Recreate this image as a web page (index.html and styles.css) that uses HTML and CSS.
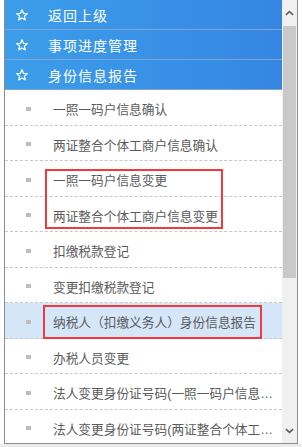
FILE: index.html
```html
<!DOCTYPE html>
<html lang="zh-CN">
<head>
  <meta charset="UTF-8" />
  <title>身份信息报告</title>
  <meta name="viewport" content="width=device-width, initial-scale=1.0" />
  <link rel="stylesheet" href="styles.css">
</head>
<body>
  <div class="frame">
    <div class="menu">
      <ul class="groups">
        <li class="group">
          <svg class="star" viewBox="0 0 12 12"><polygon points="6,0.8 7.5,4.3 11.3,4.6 8.4,7.1 9.3,10.9 6,8.9 2.7,10.9 3.6,7.1 0.7,4.6 4.5,4.3" /></svg>
          <span>返回上级</span>
        </li>
        <li class="group">
          <svg class="star" viewBox="0 0 12 12"><polygon points="6,0.8 7.5,4.3 11.3,4.6 8.4,7.1 9.3,10.9 6,8.9 2.7,10.9 3.6,7.1 0.7,4.6 4.5,4.3" /></svg>
          <span>事项进度管理</span>
        </li>
        <li class="group">
          <svg class="star" viewBox="0 0 12 12"><polygon points="6,0.8 7.5,4.3 11.3,4.6 8.4,7.1 9.3,10.9 6,8.9 2.7,10.9 3.6,7.1 0.7,4.6 4.5,4.3" /></svg>
          <span>身份信息报告</span>
        </li>
      </ul>

      <ul class="items">
        <li class="item"><i class="dot"></i><span>一照一码户信息确认</span></li>
        <li class="item"><i class="dot"></i><span>两证整合个体工商户信息确认</span></li>
        <li class="item"><i class="dot"></i><span>一照一码户信息变更</span></li>
        <li class="item"><i class="dot"></i><span>两证整合个体工商户信息变更</span></li>
        <li class="item"><i class="dot"></i><span>扣缴税款登记</span></li>
        <li class="item"><i class="dot"></i><span>变更扣缴税款登记</span></li>
        <li class="item active"><i class="dot"></i><span>纳税人（扣缴义务人）身份信息报告</span></li>
        <li class="item"><i class="dot"></i><span>办税人员变更</span></li>
        <li class="item"><i class="dot"></i><span>法人变更身份证号码(一照一码户信息变更)</span></li>
        <li class="item"><i class="dot"></i><span>法人变更身份证号码(两证整合个体工商户信息变更)</span></li>
      </ul>

      <div class="mark mark-a"></div>
      <div class="mark mark-b"></div>
    </div>

    <div class="scrollbar">
      <div class="arrow">
        <svg viewBox="0 0 10 6"><polyline points="1,5 5,1.5 9,5" /></svg>
      </div>
      <div class="track">
        <div class="thumb"></div>
      </div>
      <div class="arrow">
        <svg viewBox="0 0 10 6"><polyline points="1,1 5,4.5 9,1" /></svg>
      </div>
    </div>
  </div>
  <div class="bottom"></div>
</body>
</html>
```

FILE: styles.css
```css
body {
  margin: 0;
  background: #fff;
  font-family: "Noto Sans CJK SC", "Noto Sans", sans-serif;
}

ul {
  list-style: none;
  margin: 0;
  padding: 0;
}

.frame {
  display: flex;
  width: 294px;
  height: 444px;
  margin-left: 4px;
  box-sizing: border-box;
  border: 1px solid #8c8c8c;
  border-top: none;
}

.menu {
  position: relative;
  flex: 1;
  overflow: hidden;
}

.group {
  display: flex;
  align-items: center;
  height: 29px;
  padding-left: 11px;
  border-bottom: 1px solid #7ea4cf;
  background: linear-gradient(to right, #3c9eea, #3586e2);
  color: #fff;
  font-size: 14px;
  letter-spacing: 1px;
}

.star {
  width: 12px;
  height: 12px;
  margin-right: 20px;
  fill: none;
  stroke: #fff;
  stroke-width: 1.2;
  stroke-linejoin: round;
}

.item {
  display: flex;
  align-items: center;
  height: 35.5px;
  padding: 3px 5px 0 21px;
  box-sizing: border-box;
  border-bottom: 1px dashed #c8c8c8;
  color: #5a5a5a;
  font-family: "Liberation Sans", "Noto Sans CJK SC", sans-serif;
  font-size: 12.7px;
}

.item span {
  flex: 1;
  min-width: 0;
  white-space: nowrap;
  overflow: hidden;
  text-overflow: ellipsis;
}

.item.active {
  background: #d5e6f9;
}

.dot {
  width: 5px;
  height: 4px;
  margin-right: 22px;
  background: #bdbdbd;
}

.mark {
  position: absolute;
  border: 2px solid #f23a3d;
  box-sizing: border-box;
}

.mark-a {
  left: 40px;
  top: 169px;
  width: 178px;
  height: 60px;
}

.mark-b {
  left: 38px;
  top: 305px;
  width: 219px;
  height: 34px;
}

.scrollbar {
  display: flex;
  flex-direction: column;
  width: 15px;
  background: #f0f0f0;
}

.arrow {
  display: flex;
  align-items: center;
  justify-content: center;
  height: 25px;
}

.arrow svg {
  width: 9px;
  height: 6px;
  fill: none;
  stroke: #5f5f5f;
  stroke-width: 1.8;
}

.track {
  flex: 1;
}

.thumb {
  height: 252px;
  margin: 1px 1px 0;
  background: #c9c9c9;
}

.bottom {
  height: 3px;
  background: #ececec;
}
```
